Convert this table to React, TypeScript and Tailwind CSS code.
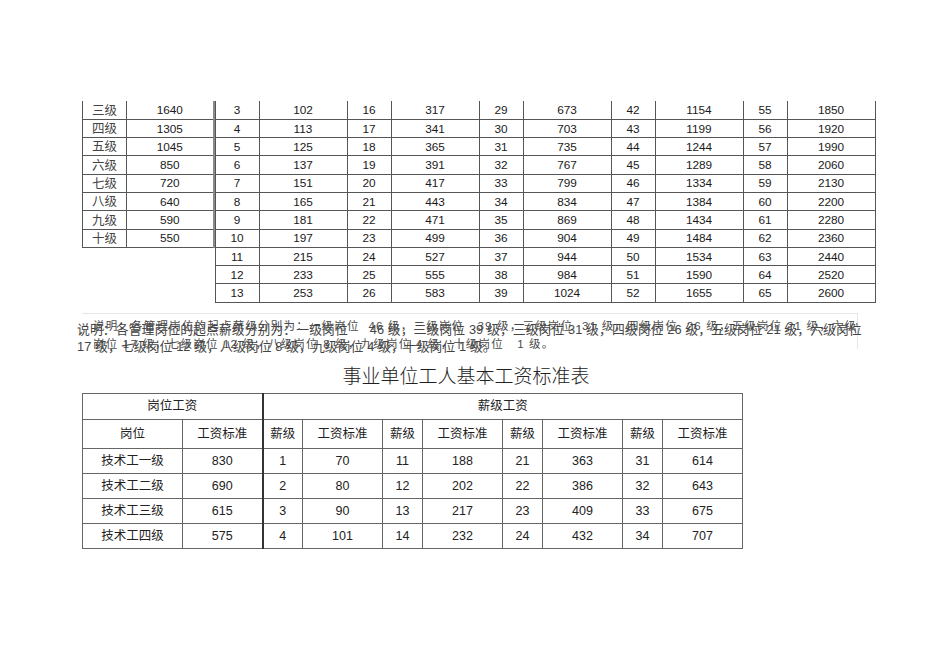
import React from 'react';

const leftRows: [string, string][] = [
  ['三级', '1640'],
  ['四级', '1305'],
  ['五级', '1045'],
  ['六级', '850'],
  ['七级', '720'],
  ['八级', '640'],
  ['九级', '590'],
  ['十级', '550'],
];

const salaryCols: { start: number; values: number[] }[] = [
  { start: 3, values: [102, 113, 125, 137, 151, 165, 181, 197, 215, 233, 253] },
  { start: 16, values: [317, 341, 365, 391, 417, 443, 471, 499, 527, 555, 583] },
  { start: 29, values: [673, 703, 735, 767, 799, 834, 869, 904, 944, 984, 1024] },
  { start: 42, values: [1154, 1199, 1244, 1289, 1334, 1384, 1434, 1484, 1534, 1590, 1655] },
  { start: 55, values: [1850, 1920, 1990, 2060, 2130, 2200, 2280, 2360, 2440, 2520, 2600] },
];

const workerRows: { post: string; pay: number; grades: [number, number][] }[] = [
  { post: '技术工一级', pay: 830, grades: [[1, 70], [11, 188], [21, 363], [31, 614]] },
  { post: '技术工二级', pay: 690, grades: [[2, 80], [12, 202], [22, 386], [32, 643]] },
  { post: '技术工三级', pay: 615, grades: [[3, 90], [13, 217], [23, 409], [33, 675]] },
  { post: '技术工四级', pay: 575, grades: [[4, 101], [14, 232], [24, 432], [34, 707]] },
];

const TopTables = () => (
  <div className="flex items-start text-[11.8px] leading-none text-[#1a1a1a]">
    <table className="border-collapse table-fixed">
      <tbody>
        {leftRows.map(([name, value]) => (
          <tr key={name} className="h-[18.3px]">
            <td className="w-[44px] pt-[2px] border-l border-b border-r border-[#555] text-center text-[12.5px] text-[#444]">{name}</td>
            <td className="w-[87px] pt-[2px] border-b border-r-2 border-b-[#555] border-r-[#8a8a8a] text-center">{value}</td>
          </tr>
        ))}
      </tbody>
    </table>
    <table className="border-collapse table-fixed">
      <tbody>
        {salaryCols[0].values.map((_, i) => (
          <tr key={i} className="h-[18.3px]">
            {salaryCols.map((col, c) => (
              <React.Fragment key={c}>
                <td className={`w-[44px] pt-[2px] border-b border-r border-[#555] text-center ${c === 0 ? 'border-l' : ''}`}>
                  {col.start + i}
                </td>
                <td className="w-[88px] pt-[2px] border-b border-r border-[#555] text-center">{col.values[i]}</td>
              </React.Fragment>
            ))}
          </tr>
        ))}
      </tbody>
    </table>
  </div>
);

// the note is printed twice in the source, the two copies sit over each other
const NoteBox = () => (
  <div className="relative mt-[10px] w-[776px] h-[36px] border-t border-r border-[#e6e6e6]">
    <div className="-ml-[5px] pt-[7px] text-[12.8px] tracking-[0.1px] leading-[17px] text-[#444] whitespace-nowrap">
      <div>说明：各管理岗位的起点薪级分别为：一级岗位{'\u00a0\u00a0\u00a0\u00a0\u00a0\u00a0'}46 级，二级岗位 39 级，三级岗位 31 级，四级岗位 26 级，五级岗位 21 级，六级岗位</div>
      <div>17 级，七级岗位 12 级，八级岗位 8 级，九级岗位 4 级，十级岗位 1 级。</div>
    </div>
    <div className="absolute left-[11px] top-[3px] text-[11.5px] tracking-[1.2px] leading-[18px] text-[#4a4a4a] whitespace-nowrap">
      <div>说明：各管理岗位的起点薪级分别为：一级岗位{'\u00a0\u00a0'}46 级，二级岗位{'\u00a0\u00a0\u00a0'}39 级，三级岗位{'\u00a0\u00a0'}31 级，四级岗位{'\u00a0\u00a0'}26 级，五级岗位{'\u00a0'}21 级，六级</div>
      <div>岗位 17 级，七级岗位 12 级，八级岗位 8 级，九级岗位 4 级，十级岗位{'\u00a0\u00a0\u00a0'}1 级。</div>
    </div>
  </div>
);

const cell = 'border border-[#666] text-center';

const WorkerTable = () => (
  <table className="border-collapse table-fixed text-[12.5px] leading-none text-[#222] border border-[#333]">
    <tbody>
      <tr className="h-[26px]">
        <td colSpan={2} className={`${cell} border-r-2 border-r-[#333]`}>岗位工资</td>
        <td colSpan={8} className={cell}>薪级工资</td>
      </tr>
      <tr className="h-[29px]">
        <td className={`${cell} w-[100px]`}>岗位</td>
        <td className={`${cell} w-[80px] border-r-2 border-r-[#333]`}>工资标准</td>
        {[0, 1, 2, 3].map(i => (
          <React.Fragment key={i}>
            <td className={`${cell} w-[40px]`}>薪级</td>
            <td className={`${cell} w-[80px]`}>工资标准</td>
          </React.Fragment>
        ))}
      </tr>
      {workerRows.map(row => (
        <tr key={row.post} className="h-[25px]">
          <td className={cell}>{row.post}</td>
          <td className={`${cell} border-r-2 border-r-[#333]`}>{row.pay}</td>
          {row.grades.map(([g, v]) => (
            <React.Fragment key={g}>
              <td className={cell}>{g}</td>
              <td className={cell}>{v}</td>
            </React.Fragment>
          ))}
        </tr>
      ))}
    </tbody>
  </table>
);

export default function App() {
  return (
    <div className="w-[950px] h-[672px] bg-white pt-[101px] pl-[82px] font-['Liberation_Sans','Noto_Sans_CJK_SC',sans-serif] text-[#111]">
      <TopTables />
      <NoteBox />
      <h1 className="w-[768px] mt-[14px] text-center text-[19px] leading-[24px] text-[#222] font-['Noto_Sans_CJK_SC',sans-serif] font-light">
        事业单位工人基本工资标准表
      </h1>
      <div className="mt-[6px]">
        <WorkerTable />
      </div>
    </div>
  );
}
